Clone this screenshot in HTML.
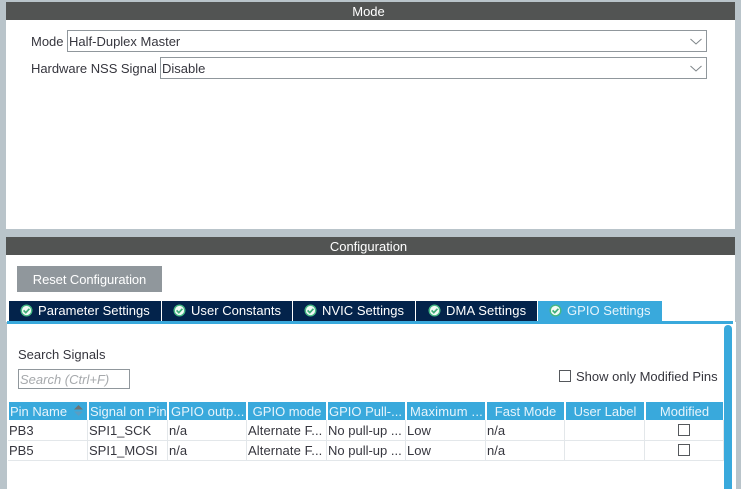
<!DOCTYPE html>
<html>
<head>
<meta charset="utf-8">
<style>
html,body{margin:0;padding:0;width:741px;height:489px;overflow:hidden;background:#b9c4ca;}
body{position:relative;font-family:"Liberation Sans",Arial,sans-serif;font-size:13px;color:#36363e;}
div,span{position:absolute;box-sizing:border-box;white-space:nowrap;}
.panel{background:#fff;}
.hd{background:#525453;color:#fff;text-align:center;height:18px;line-height:19px;left:6px;width:729px;font-size:13px;padding-right:4px;}
.sel{background:#fff;border:1px solid #90979c;height:22px;line-height:21px;padding-left:1px;color:#36363e;}
.lbl{line-height:16px;}
.tab{top:301px;height:20px;background:#03234b;color:#fff;line-height:20px;font-size:13px;letter-spacing:.03px;}
.tab span{top:0;}
.th{top:402px;height:18px;background:#39a9dc;color:#e6f4fb;line-height:19px;font-size:13px;text-align:center;overflow:hidden;}
.td{height:20px;line-height:21px;color:#36363e;font-size:13px;}
.vl{width:1px;height:40px;top:420px;background:#e3e7ea;}
.hl{height:1px;left:8px;width:716px;background:#e3e7ea;}
.cb{width:12px;height:12px;border:1px solid #55585c;background:#fff;}
.ic{position:absolute;top:2.5px;}
</style>
</head>
<body>
<div class="panel" style="left:6px;top:20px;width:729px;height:209px;"></div>
<div class="panel" style="left:6px;top:255px;width:729px;height:67px;"></div>
<div class="panel" style="left:7px;top:322px;width:729px;height:167px;"></div>
<div class="hd" style="top:2px;">Mode</div>
<div class="hd" style="top:237px;">Configuration</div>

<div class="lbl" style="left:31px;top:34px;">Mode</div>
<div class="sel" style="left:67px;top:30px;width:640px;">Half-Duplex Master</div>
<svg style="position:absolute;left:690px;top:38px" width="12" height="8"><path d="M0.5 1 L6 6 L11.5 1" fill="none" stroke="#7d8488" stroke-width="1"/></svg>
<div class="lbl" style="left:31px;top:61px;letter-spacing:-.03px;">Hardware NSS Signal</div>
<div class="sel" style="left:160px;top:57px;width:547px;">Disable</div>
<svg style="position:absolute;left:690px;top:65px" width="12" height="8"><path d="M0.5 1 L6 6 L11.5 1" fill="none" stroke="#7d8488" stroke-width="1"/></svg>

<div style="left:17px;top:266px;width:145px;height:26px;background:#90979c;color:#fff;text-align:center;line-height:27px;font-size:13px;letter-spacing:-.08px;">Reset Configuration</div>

<div class="tab" style="left:9px;width:152px;"><svg class="ic" style="left:10.5px" width="13" height="13"><circle cx="6.5" cy="6.5" r="5.3" fill="#f2fbf5" stroke="#45b884" stroke-width="1.4"/><path d="M3.6 6.4 L5.8 8.6 L9.4 4.8" fill="none" stroke="#3fae7a" stroke-width="1.7"/></svg><span style="left:29px">Parameter Settings</span></div>
<div class="tab" style="left:162px;width:130px;"><svg class="ic" style="left:10.5px" width="13" height="13"><circle cx="6.5" cy="6.5" r="5.3" fill="#f2fbf5" stroke="#45b884" stroke-width="1.4"/><path d="M3.6 6.4 L5.8 8.6 L9.4 4.8" fill="none" stroke="#3fae7a" stroke-width="1.7"/></svg><span style="left:29px">User Constants</span></div>
<div class="tab" style="left:293px;width:122px;"><svg class="ic" style="left:10.5px" width="13" height="13"><circle cx="6.5" cy="6.5" r="5.3" fill="#f2fbf5" stroke="#45b884" stroke-width="1.4"/><path d="M3.6 6.4 L5.8 8.6 L9.4 4.8" fill="none" stroke="#3fae7a" stroke-width="1.7"/></svg><span style="left:29px">NVIC Settings</span></div>
<div class="tab" style="left:416px;width:121px;"><svg class="ic" style="left:11.5px" width="13" height="13"><circle cx="6.5" cy="6.5" r="5.3" fill="#f2fbf5" stroke="#45b884" stroke-width="1.4"/><path d="M3.6 6.4 L5.8 8.6 L9.4 4.8" fill="none" stroke="#3fae7a" stroke-width="1.7"/></svg><span style="left:30px;letter-spacing:.12px">DMA Settings</span></div>
<div class="tab" style="left:538px;width:124px;background:#39a9dc;color:#e6f4fb;"><svg class="ic" style="left:10.5px" width="13" height="13"><circle cx="6.5" cy="6.5" r="5.3" fill="#f2fbf5" stroke="#45b884" stroke-width="1.4"/><path d="M3.6 6.4 L5.8 8.6 L9.4 4.8" fill="none" stroke="#3fae7a" stroke-width="1.7"/></svg><span style="left:29px">GPIO Settings</span></div>
<div style="left:7px;top:321px;width:726px;height:3px;background:#39a9dc;"></div>

<div style="left:724px;top:325px;width:8px;height:164px;background:#39a9dc;border-radius:4px 4px 0 0;"></div>

<div class="lbl" style="left:18px;top:347px;">Search Signals</div>
<div style="left:18px;top:369px;width:112px;height:20px;border:1px solid #90979c;background:#fff;color:#a6a9ac;font-style:italic;line-height:19px;padding-left:1px;">Search (Ctrl+F)</div>
<div class="cb" style="left:559px;top:370px;"></div>
<div class="lbl" style="left:576px;top:369px;">Show only Modified Pins</div>

<div class="th" style="left:9px;width:78px;text-align:left;padding-left:1px;">Pin Name</div>
<svg style="position:absolute;left:73px;top:404px" width="11" height="13"><path d="M1 5.5 L5.5 1 L10 5.5 Z" fill="#6d7474"/><path d="M1 7.5 L5.5 12 L10 7.5 Z" fill="#5b9dc2"/></svg>
<div class="th" style="left:89px;width:78px;text-align:left;padding-left:1px;">Signal on Pin</div>
<div class="th" style="left:169px;width:77px;text-align:left;padding-left:2px;letter-spacing:.1px;">GPIO outp...</div>
<div class="th" style="left:248px;width:78px;">GPIO mode</div>
<div class="th" style="left:328px;width:77px;text-align:left;padding-left:1px;">GPIO Pull-...</div>
<div class="th" style="left:407px;width:78px;text-align:left;padding-left:3px;letter-spacing:.2px;">Maximum ...</div>
<div class="th" style="left:487px;width:77px;">Fast Mode</div>
<div class="th" style="left:566px;width:78px;">User Label</div>
<div class="th" style="left:646px;width:77px;">Modified</div>

<div class="hl" style="top:440px;"></div>
<div class="hl" style="top:460px;"></div>
<div class="vl" style="left:87px;"></div>
<div class="vl" style="left:167px;"></div>
<div class="vl" style="left:246px;"></div>
<div class="vl" style="left:326px;"></div>
<div class="vl" style="left:405px;"></div>
<div class="vl" style="left:485px;"></div>
<div class="vl" style="left:564px;"></div>
<div class="vl" style="left:644px;"></div>
<div class="vl" style="left:723px;"></div>

<div class="td" style="left:9px;top:420px;">PB3</div>
<div class="td" style="left:89px;top:420px;">SPI1_SCK</div>
<div class="td" style="left:169px;top:420px;">n/a</div>
<div class="td" style="left:248px;top:420px;letter-spacing:.1px;">Alternate F...</div>
<div class="td" style="left:328px;top:420px;">No pull-up ...</div>
<div class="td" style="left:407px;top:420px;">Low</div>
<div class="td" style="left:487px;top:420px;">n/a</div>
<div class="cb" style="left:678px;top:424px;"></div>

<div class="td" style="left:9px;top:440px;">PB5</div>
<div class="td" style="left:89px;top:440px;">SPI1_MOSI</div>
<div class="td" style="left:169px;top:440px;">n/a</div>
<div class="td" style="left:248px;top:440px;letter-spacing:.1px;">Alternate F...</div>
<div class="td" style="left:328px;top:440px;">No pull-up ...</div>
<div class="td" style="left:407px;top:440px;">Low</div>
<div class="td" style="left:487px;top:440px;">n/a</div>
<div class="cb" style="left:678px;top:444px;"></div>
</body>
</html>
